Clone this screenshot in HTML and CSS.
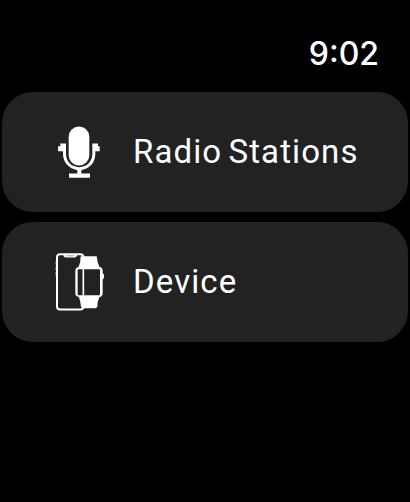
FILE: index.html
```html
<!DOCTYPE html>
<html lang="en">

<head>
    <meta charset="UTF-8">
    <title>Radio</title>
    <link rel="stylesheet" href="styles.css">
</head>

<body>

    <header class="status-bar">
        <time class="clock">9:02</time>
    </header>

    <main class="menu">
        <button class="menu-item">
            <svg class="icon" viewBox="0 6.500 210 225">
                <rect x="71" y="41" width="62" height="117" rx="31" fill="#fff" />
                <path d="M39 100V115H54V123C54 149 72 168 97 172V182H72V195H135V182H109V172C134 168 151 149 151 123V115H164V100H159V92H142V123C142 146 126 163 102.500 163C79 163 63 146 63 123V92H46V100Z" fill="#fff" />
            </svg>
            <span class="label">Radio Stations</span>
        </button>
        <button class="menu-item">
            <svg class="icon" viewBox="0 -0.500 210 225">
                <rect x="36" y="27" width="79" height="166" rx="9" fill="none" stroke="#fff" stroke-width="6" />
                <path d="M55 27H96V32Q94 37 89 37H63Q57 37 55 32Z" fill="#fff" />
                <path d="M62 32H88" stroke="#777" stroke-width="2" />
                <path d="M32 48V58M32 65V76M32 80V91" stroke="#999" stroke-width="2" />
                <path d="M107 33H155Q157 53 163 65Q173 67 173 77V84Q177 85 177 90V97Q177 101 173 102V144Q173 153 163 156Q157 168 157 184Q156 189 150 189H113Q109 189 108 184Q107 168 101 155Q91 153 91 144V77Q91 68 101 65Q107 53 107 33Z" fill="#fff" />
                <rect x="98" y="72" width="67" height="78" rx="3" fill="#222" />
                <path d="M115 70V152" stroke="#fff" stroke-width="5" />
            </svg>
            <span class="label">Device</span>
        </button>
    </main>

</body>

</html>
```
FILE: styles.css
```css
body {
    margin: 0;
    background-color: #000;
    color: #fff;
    font-family: Roboto, "Liberation Sans", sans-serif;
}

.status-bar {
    display: flex;
    justify-content: flex-end;
    height: 59px;
    padding: 33px 31px 0 0;
}

.clock {
    font-family: Inter, "Liberation Sans", sans-serif;
    font-size: 32px;
    font-weight: 500;
    line-height: 42px;
    font-feature-settings: "case";
}

.menu {
    display: grid;
    gap: 10px;
    padding: 0 2px;
}

.menu-item {
    display: flex;
    align-items: center;
    height: 120px;
    padding: 0 0 0 43px;
    border: none;
    border-radius: 31px;
    background-color: #222;
    color: inherit;
    font: inherit;
}

.icon {
    width: 70px;
    height: 75px;
    margin-right: 18px;
}

.label {
    font-size: 33px;
    line-height: 40px;
    letter-spacing: 1.1px;
    word-spacing: -3px;
    white-space: nowrap;
}
```
